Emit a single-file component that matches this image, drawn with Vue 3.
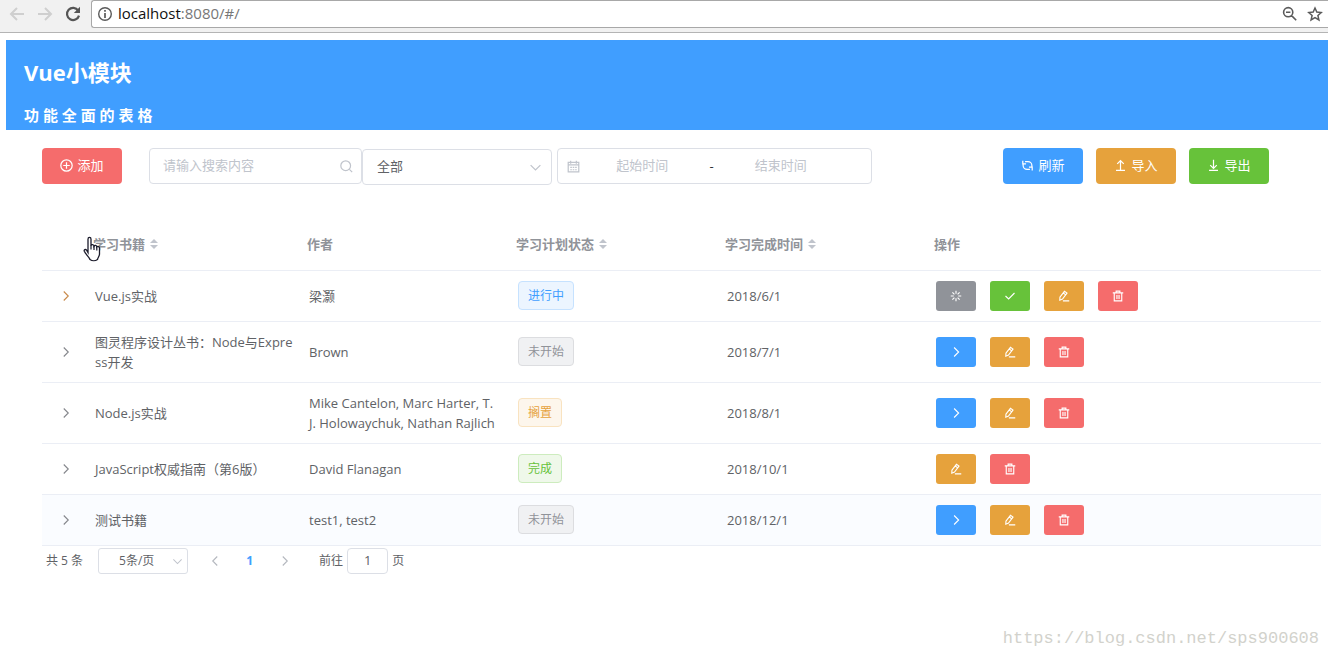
<script setup>
import { ref } from 'vue'

const keyword = ref('')
const status = ref('全部')
const startDate = ref('')
const endDate = ref('')
const pageSize = ref('5条/页')
const jumpTo = ref('1')
const address = ref('localhost:8080/#/')

const actions = {
  pause: { label: '搁置', tone: 'info', icon: 'loading' },
  finish: { label: '完成', tone: 'success', icon: 'check' },
  start: { label: '开始', tone: 'primary', icon: 'right' },
  edit: { label: '编辑', tone: 'warning', icon: 'edit' },
  remove: { label: '删除', tone: 'danger', icon: 'delete' },
}

const books = [
  { id: 1, name: 'Vue.js实战', author: '梁灏', state: '进行中', tone: 'primary', date: '2018/6/1', ops: ['pause', 'finish', 'edit', 'remove'], focus: true },
  { id: 2, name: '图灵程序设计丛书：Node与Express开发', author: 'Brown', state: '未开始', tone: 'info', date: '2018/7/1', ops: ['start', 'edit', 'remove'] },
  { id: 3, name: 'Node.js实战', author: 'Mike Cantelon, Marc Harter, T. J. Holowaychuk, Nathan Rajlich', state: '搁置', tone: 'warning', date: '2018/8/1', ops: ['start', 'edit', 'remove'] },
  { id: 4, name: 'JavaScript权威指南（第6版）', author: 'David Flanagan', state: '完成', tone: 'success', date: '2018/10/1', ops: ['edit', 'remove'] },
  { id: 5, name: '测试书籍', author: 'test1, test2', state: '未开始', tone: 'info', date: '2018/12/1', ops: ['start', 'edit', 'remove'], striped: true },
]

const icons = {
  loading: 'M8 1v4M8 11v4M1 8h4M11 8h4M3.2 3.2l2.7 2.7M10.1 10.1l2.7 2.7M3.2 12.8l2.7-2.7M10.1 5.9l2.7-2.7',
  check: 'M2 8l4.2 4L14 4',
  right: 'M5.5 2l6 6-6 6',
  edit: 'M2.6 9.6L8.6 1.8l3.4 2.4-6 7.8-3.6 1.6zM7 4l3.4 2.5M6.5 14.5h8.5',
  delete: 'M1 3.8h14M5.5 3.6V1.5h5v2.1M3 4v10.5h10V4M6.6 6.5v5.5M9.4 6.5v5.5',
}
</script>

<template>
  <div class="window">
    <div class="browser">
      <button class="nav" aria-label="后退" disabled>
        <svg viewBox="0 0 16 16" width="16" height="16"><path d="M15 8H2M8 2L2 8l6 6" fill="none" stroke="#cfcfcf" stroke-width="2" /></svg>
      </button>
      <button class="nav" aria-label="前进" disabled>
        <svg viewBox="0 0 16 16" width="16" height="16"><path d="M1 8h13M8 2l6 6-6 6" fill="none" stroke="#cfcfcf" stroke-width="2" /></svg>
      </button>
      <button class="nav" aria-label="重新加载">
        <svg viewBox="0 0 16 16" width="16" height="16">
          <path d="M13.2 4.6A6.1 6.1 0 1 0 14 9.6" fill="none" stroke="#555" stroke-width="2.2" />
          <path d="M15 0.8V7H8.8z" fill="#555" />
        </svg>
      </button>
      <div class="address">
        <svg viewBox="0 0 16 16" width="16" height="16">
          <circle cx="8" cy="8" r="6.3" fill="none" stroke="#5a5a5a" stroke-width="1.4" />
          <path d="M8 7v5M8 4v1.7" stroke="#5a5a5a" stroke-width="1.7" />
        </svg>
        <a class="url" :href="'http://' + address">localhost<span>:8080/#/</span></a>
        <button class="tool" aria-label="缩放">
          <svg viewBox="0 0 16 16" width="16" height="16"><path d="M10.8 6.2a4.6 4.6 0 1 1-9.2 0a4.6 4.6 0 1 1 9.2 0zM9.6 9.6l4.6 4.6M4 6.2h4.4" fill="none" stroke="#5a5a5a" stroke-width="1.6" /></svg>
        </button>
        <button class="tool" aria-label="收藏">
          <svg viewBox="0 0 16 16" width="16" height="16"><path d="M8 2l1.8 4.1 4.4.4-3.3 3 1 4.4L8 11.6l-3.9 2.3 1-4.4-3.3-3 4.4-.4z" fill="none" stroke="#5a5a5a" stroke-width="1.5" /></svg>
        </button>
      </div>
    </div>

    <main class="page">
      <header class="banner">
        <h2>Vue小模块</h2>
        <h4>功 能 全 面 的 表 格</h4>
      </header>

      <div class="toolbar">
        <button class="btn danger">
          <svg viewBox="0 0 16 16" width="13" height="13"><path d="M15 8A7 7 0 1 1 1 8a7 7 0 1 1 14 0zM8 4v8M4 8h8" /></svg>
          <span>添加</span>
        </button>
        <div class="filters">
          <label class="field search">
            <input v-model="keyword" type="text" placeholder="请输入搜索内容" aria-label="搜索内容" />
            <svg viewBox="0 0 16 16" width="13" height="13"><path d="M13 7A6 6 0 1 1 1 7a6 6 0 1 1 12 0zM11.3 11.3L15 15" /></svg>
          </label>
          <label class="field state">
            <select v-model="status" aria-label="学习计划状态">
              <option>全部</option><option>进行中</option><option>未开始</option><option>搁置</option><option>完成</option>
            </select>
            <svg viewBox="0 0 16 16" width="13" height="13"><path d="M2 5l6 6 6-6" /></svg>
          </label>
          <div class="field range">
            <svg viewBox="0 0 16 16" width="13" height="13"><path d="M1.5 3h13v11.5h-13zM1.5 6h13M4.5 1v3.5M11.5 1v3.5M4 9h2M7 9h2M10 9h2M4 12h2M7 12h2M10 12h2" /></svg>
            <input v-model="startDate" type="text" placeholder="起始时间" aria-label="起始时间" />
            <span>-</span>
            <input v-model="endDate" type="text" placeholder="结束时间" aria-label="结束时间" />
          </div>
        </div>
        <div class="bulk">
          <button class="btn primary">
            <svg viewBox="0 0 16 16" width="13" height="13"><path d="M5 3.2h3.5A4.9 4.9 0 0 1 13.4 8v1.5M11 12.8H7.5A4.9 4.9 0 0 1 2.6 8V6.5M2.2 2v4h4M13.8 14v-4h-4" /></svg>
            <span>刷新</span>
          </button>
          <button class="btn warning">
            <svg viewBox="0 0 16 16" width="13" height="13"><path d="M8 13.5V2.5M4 6l4-4 4 4M2.5 14h11" /></svg>
            <span>导入</span>
          </button>
          <button class="btn success">
            <svg viewBox="0 0 16 16" width="13" height="13"><path d="M8 1v10.5M4 7.5l4 4 4-4M2.5 14h11" /></svg>
            <span>导出</span>
          </button>
        </div>
      </div>

      <table class="grid">
        <colgroup>
          <col class="c-expand" /><col class="c-name" /><col class="c-mid" /><col class="c-mid" /><col class="c-mid" /><col />
        </colgroup>
        <thead>
          <tr>
            <th></th>
            <th><span class="sortable">学习书籍<i class="sort"></i></span></th>
            <th>作者</th>
            <th><span class="sortable">学习计划状态<i class="sort"></i></span></th>
            <th><span class="sortable">学习完成时间<i class="sort"></i></span></th>
            <th>操作</th>
          </tr>
        </thead>
        <tbody>
          <tr v-for="book in books" :key="book.id" :class="{ striped: book.striped }">
            <td class="expand">
              <button :class="{ focus: book.focus }" aria-label="展开">
                <svg viewBox="0 0 16 16" width="12" height="12"><path d="M5 2l6 6-6 6" /></svg>
              </button>
            </td>
            <td class="name">{{ book.name }}</td>
            <td>{{ book.author }}</td>
            <td><span class="tag" :class="book.tone">{{ book.state }}</span></td>
            <td>{{ book.date }}</td>
            <td>
              <div class="ops">
                <button v-for="op in book.ops" :key="op" class="btn small" :class="actions[op].tone" :aria-label="actions[op].label">
                  <svg viewBox="0 0 16 16" width="12" height="12"><path :d="icons[actions[op].icon]" /></svg>
                </button>
              </div>
            </td>
          </tr>
        </tbody>
      </table>

      <nav class="pager" aria-label="分页">
        <span class="total">共 5 条</span>
        <label class="field size">
          <select v-model="pageSize" aria-label="每页条数"><option>5条/页</option><option>10条/页</option></select>
          <svg viewBox="0 0 16 16" width="11" height="11"><path d="M2 5l6 6 6-6" /></svg>
        </label>
        <button aria-label="上一页"><svg viewBox="0 0 16 16" width="12" height="12"><path d="M11 2L5 8l6 6" /></svg></button>
        <button class="current">1</button>
        <button aria-label="下一页"><svg viewBox="0 0 16 16" width="12" height="12"><path d="M5 2l6 6-6 6" /></svg></button>
        <label class="jump">前往<input v-model="jumpTo" type="text" />页</label>
      </nav>
    </main>

    <svg class="cursor" viewBox="0 0 20 26" width="20" height="26">
      <path d="M6 16.5V3.2C6 .8 9 .8 9 3.2v6.3c.5-1.4 2.8-1.2 3 .6.6-1.2 2.7-.9 2.8.8.8-1 2.7-.4 2.7 1.2V18c0 2-1.5 3.3-2 5.5-2 1.4-5.5 1.4-7.5 0-.8-2.5-4.2-5-5.7-8.2-.6-1.5 1.2-2.5 2.3-1.2z" fill="#fff" stroke="#1b1b2b" stroke-width="1.3" />
      <path d="M9 9v4.5M12 10v4M14.8 11v3.5" stroke="#1b1b2b" stroke-width="1.2" />
    </svg>
    <div class="watermark">https://blog.csdn.net/sps900608</div>
  </div>
</template>

<style>
body { background: #fff; }
</style>

<style scoped>
.window {
  position: relative;
  min-height: 100vh;
  overflow: hidden;
  font-family: "Open Sans", "Noto Sans CJK SC", sans-serif;
  font-size: 13px;
  line-height: 20px;
  color: #606266;
}
.window * { box-sizing: border-box; }
button, input, select { font: inherit; color: inherit; margin: 0; }
button { padding: 0; border: 0; background: none; display: inline-flex; align-items: center; justify-content: center; }
svg { flex: none; }
.btn path, .field path, .expand path, .pager path { fill: none; stroke: currentColor; stroke-width: 1.5; }

.browser {
  display: flex;
  gap: 12px;
  height: 33px;
  padding-left: 9px;
  background: #f1f1f1;
  border-bottom: 1px solid #b4b4b4;
}
.nav { height: 28px; width: 16px; }
.address {
  flex: 1;
  display: flex;
  align-items: center;
  height: 28px;
  margin-left: -2px;
  padding: 0 5px;
  border: 1px solid #a8a8a8;
  border-right: 0;
  border-radius: 3px 0 0 3px;
  background: #fff;
}
.url { flex: 1; margin-left: 5px; padding-bottom: 2px; font-size: 15px; color: #111; text-decoration: none; }
.url span { color: #777; }
.tool { margin-left: 9px; }

.page { padding: 7px 0 0 6px; }
.banner { height: 90px; padding: 17px 18px; background: #409eff; color: #fff; }
.banner h2 { margin: 0; font-size: 22px; line-height: 30px; }
.banner h4 { margin: 18px 0 0; font-size: 15px; line-height: 20px; }

.toolbar { display: flex; align-items: flex-start; margin: 18px 59px 0 36px; }
.btn {
  gap: 4px;
  width: 80px;
  height: 36px;
  padding-bottom: 2px;
  border-radius: 4px;
  color: #fff;
}
.btn.primary { background: #409eff; }
.btn.success { background: #67c23a; }
.btn.warning { background: #e6a23c; }
.btn.danger { background: #f56c6c; }
.btn.info { background: #909399; }
.btn.small { width: 40px; height: 30px; padding: 0; border-radius: 3px; }
.filters { display: flex; margin-left: 27px; }
.bulk { display: flex; gap: 13px; margin-left: auto; }
.field {
  display: flex;
  align-items: center;
  height: 36px;
  border: 1px solid #dcdfe6;
  border-radius: 4px;
  background: #fff;
  color: #c0c4cc;
}
.field input, .field select {
  flex: 1;
  min-width: 0;
  height: 100%;
  padding: 0 0 2px;
  border: 0;
  outline: 0;
  background: none;
  appearance: none;
  color: #606266;
}
.field input::placeholder { color: #c0c4cc; opacity: 1; }
.search { width: 213px; padding: 0 8px 0 13px; }
.state { width: 190px; margin-top: 1px; padding: 0 9px 0 14px; }
.range { width: 315px; margin-left: 5px; padding: 0 28px 0 9px; }
.range input { text-align: center; }
.range span { width: 14px; text-align: center; color: #303133; }

.grid {
  width: calc(100% - 43px);
  margin: 35px 7px 0 36px;
  table-layout: fixed;
  border-collapse: separate;
  border-spacing: 0;
}
.c-expand { width: 44px; }
.c-name { width: 214px; }
.c-mid { width: 209px; }
th, td {
  padding: 10px 10px 10px 9px;
  border-bottom: 1px solid #ebeef5;
  text-align: left;
  vertical-align: middle;
  word-break: break-all;
}
th { height: 51px; padding: 10px 7px 12px; color: #909399; font-weight: 700; }
td { height: 51px; }
.name { padding-right: 5px; }
.striped td { background: #fafcff; }
.sortable { display: inline-flex; align-items: center; gap: 5px; }
.sort { display: grid; gap: 2px; }
.sort::before, .sort::after { content: ""; border: 4px solid transparent; }
.sort::before { border-top: 0; border-bottom-color: #c0c4cc; }
.sort::after { border-bottom: 0; border-top-color: #c0c4cc; }
.expand button { margin-left: 9px; display: flex; color: #85878c; }
.expand button.focus { color: #c98a4b; }
.tag {
  display: block;
  width: fit-content;
  margin-bottom: 1px;
  padding: 0 9px;
  border: 1px solid;
  border-radius: 4px;
  font-size: 12px;
  line-height: 27px;
}
.tag.primary { color: #409eff; background: #ecf5ff; border-color: #c6e2ff; }
.tag.info { color: #909399; background: #f0f1f3; border-color: #dcdde0; }
.tag.warning { color: #e6a23c; background: #fdf6ec; border-color: #f9e3c0; }
.tag.success { color: #67c23a; background: #eff8ea; border-color: #cdecbe; }
.ops { display: flex; gap: 14px; }

.pager { display: flex; align-items: center; margin: 2px 0 0 40px; font-size: 12px; }
.pager button { width: 35px; height: 26px; color: #b4b8bf; }
.pager .current { color: #409eff; font-weight: 700; }
.size { width: 90px; height: 26px; margin: 0 9px 0 15px; padding: 0 4px; border-radius: 3px; }
.size select { padding: 0 0 0 16px; }
.jump { display: flex; align-items: center; gap: 4px; margin-left: 17px; }
.jump input {
  width: 41px;
  height: 26px;
  padding: 0 0 2px;
  border: 1px solid #dcdfe6;
  border-radius: 4px;
  background: #fff;
  font-size: 13px;
  text-align: center;
}

.cursor { position: absolute; left: 82px; top: 236px; }
.watermark {
  position: absolute;
  right: 9px;
  bottom: 8px;
  font-family: "Liberation Mono", monospace;
  font-size: 17px;
  line-height: 22px;
  color: #d2d2cc;
}
</style>
